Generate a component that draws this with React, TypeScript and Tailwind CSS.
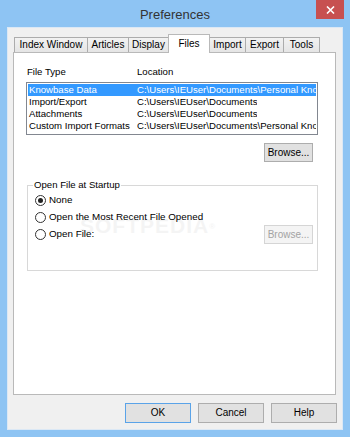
import React from "react";

/**
 * Preferences dialog - "Files" tab (Windows 8 style)
 */

type TabDef = { label: string; width: string; active?: boolean };

const tabs: TabDef[] = [
  { label: "Index Window", width: "w-[74px]" },
  { label: "Articles", width: "w-[42px]" },
  { label: "Display", width: "w-[41px]" },
  { label: "Files", width: "w-[42px]", active: true },
  { label: "Import", width: "w-[37px]" },
  { label: "Export", width: "w-[39px]" },
  { label: "Tools", width: "w-[37px]" },
];

const fileRows = [
  { type: "Knowbase Data", loc: "C:\\Users\\IEUser\\Documents\\Personal Knowbase", selected: true },
  { type: "Import/Export", loc: "C:\\Users\\IEUser\\Documents" },
  { type: "Attachments", loc: "C:\\Users\\IEUser\\Documents" },
  { type: "Custom Import Formats", loc: "C:\\Users\\IEUser\\Documents\\Personal Knowbase" },
];

function Radio({ checked = false }: { checked?: boolean }) {
  return (
    <span className="w-[11px] h-[11px] rounded-full border border-[#333333] bg-white flex items-center justify-center shrink-0">
      {checked && <span className="w-[5px] h-[5px] rounded-full bg-[#222222]" />}
    </span>
  );
}

function Button({
  children,
  width = "w-[66px]",
  height = "h-[20px]",
  isDefault = false,
  disabled = false,
}: {
  children: React.ReactNode;
  width?: string;
  height?: string;
  isDefault?: boolean;
  disabled?: boolean;
}) {
  const look = disabled
    ? "border-[#d5d5d5] bg-[#f4f4f4] text-[#a3a3a3]"
    : isDefault
    ? "border-[#5aa3e8] bg-[#e1e1e1] text-black"
    : "border-[#adadad] bg-[#e1e1e1] text-black";
  return (
    <div className={`${width} ${height} border ${look} flex items-center justify-center text-[10px] leading-none`}>
      {children}
    </div>
  );
}

export default function App() {
  return (
    <div className="w-[350px] h-[437px] bg-[#8ec4f3] flex flex-col font-['Liberation_Sans',Arial,sans-serif] overflow-hidden select-none">
      {/* Title bar */}
      <div className="h-[27px] flex items-start shrink-0">
        <div className="w-[34px]" />
        <div className="flex-1 h-[27px] pt-[2px] flex items-center justify-center text-[13px] text-[#333333]">
          Preferences
        </div>
        <div className="w-[28px] h-[19px] mr-[6px] bg-[#c75050] flex items-center justify-center">
          <svg width="9" height="8" viewBox="0 0 9 8">
            <path d="M1 0.5 L8 7.5 M8 0.5 L1 7.5" stroke="white" strokeWidth="1.6" />
          </svg>
        </div>
      </div>

      {/* Client area */}
      <div className="mx-[7px] h-[403px] border border-[#dbe8f5] bg-[#f0f0f0] flex flex-col">
        <div className="pl-[5px] pt-[6px] flex flex-col">
          {/* Tabs */}
          <div className="h-[18px] flex items-end pl-[1px]">
            {tabs.map((t, idx) => (
              <div
                key={t.label}
                className={`${t.width} ${idx > 0 ? "-ml-px" : ""} ${
                  t.active
                    ? "h-[19px] -mb-px relative z-10 bg-white border-t border-l border-r border-[#b9b9b9]"
                    : "h-[15px] bg-gradient-to-b from-[#f2f2f2] to-[#e5e5e5] border-t border-l border-r border-[#acacac]"
                } flex items-center justify-center text-[10px] text-black leading-none`}
              >
                {t.label}
              </div>
            ))}
          </div>

          {/* Tab panel */}
          <div className="relative w-[323px] h-[343px] border border-[#b9b9b9] bg-white pl-[12px] pt-[13px] flex flex-col">
            {/* Column headers */}
            <div className="h-[12px] flex text-[9.6px] leading-[12px] text-black pl-[1px]">
              <span className="w-[110px]">File Type</span>
              <span>Location</span>
            </div>

            {/* List box */}
            <div className="mt-[4px] w-[292px] h-[53px] border border-[#828790] bg-white pt-[1px] px-[1px] overflow-hidden">
              {fileRows.map((r) => (
                <div
                  key={r.type}
                  className={`h-[12px] flex text-[9.6px] leading-[12px] whitespace-nowrap ${
                    r.selected ? "bg-[#3399ff] text-white" : "text-black"
                  }`}
                >
                  <span className="w-[109px] pl-[1px] shrink-0 overflow-hidden">{r.type}</span>
                  <span className="overflow-hidden">{r.loc}</span>
                </div>
              ))}
            </div>

            {/* Browse */}
            <div className="w-[292px] flex justify-end pr-[5px] mt-[8px]">
              <Button width="w-[49px]" height="h-[19px]">Browse...</Button>
            </div>

            {/* Group box */}
            <div className="relative mt-[23px] ml-[1px] w-[291px] h-[86px] border border-[#d8d8d8] pt-[6px] pl-[7px] pr-[4px] flex flex-col">
              <span className="absolute -top-[7px] left-[5px] px-[1px] bg-white text-[9.6px] leading-[12px] text-black">
                Open File at Startup
              </span>
              <div className="h-[17px] flex items-center gap-[3px] text-[9.8px] text-black">
                <Radio checked />
                <span>None</span>
              </div>
              <div className="h-[17px] flex items-center gap-[3px] text-[9.8px] text-black">
                <Radio />
                <span>Open the Most Recent File Opened</span>
              </div>
              <div className="h-[17px] flex items-center justify-between text-[9.8px] text-black">
                <div className="flex items-center gap-[3px]">
                  <Radio />
                  <span>Open File:</span>
                </div>
                <Button width="w-[49px]" height="h-[19px]" disabled>
                  Browse...
                </Button>
              </div>
            </div>

            {/* watermark */}
            <span className="absolute left-[66px] top-[162px] text-[21px] font-bold tracking-[1px] text-black opacity-[0.04] leading-none pointer-events-none">
              SOFTPEDIA<sup className="text-[8px]">®</sup>
            </span>
          </div>
        </div>

        {/* Dialog buttons */}
        <div className="mt-[8px] flex justify-end gap-[7px] pr-[5px]">
          <Button isDefault>OK</Button>
          <Button>Cancel</Button>
          <Button>Help</Button>
        </div>
      </div>
    </div>
  );
}
